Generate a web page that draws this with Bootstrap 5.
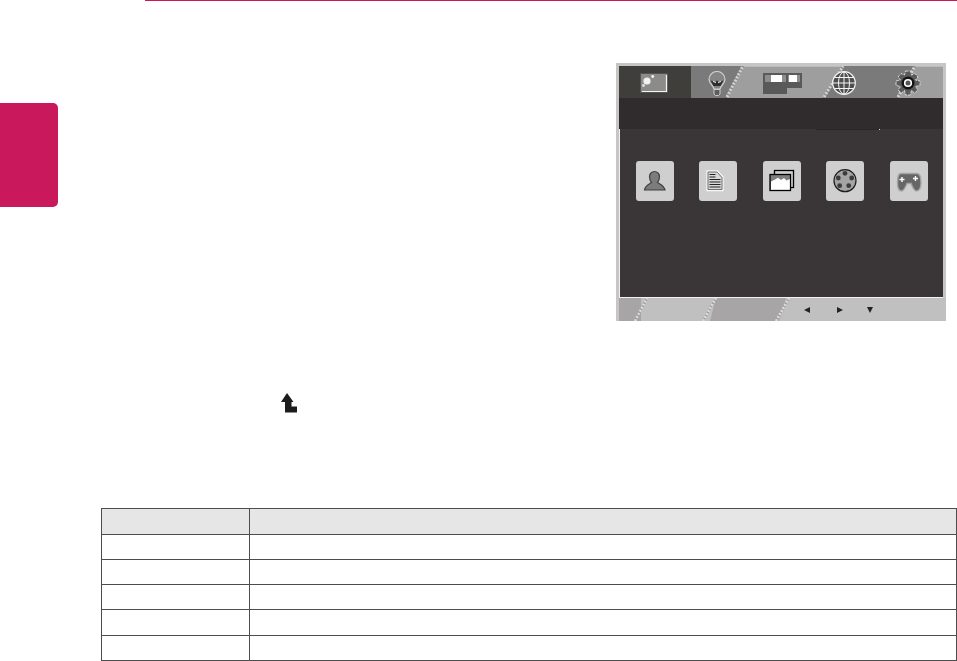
<!DOCTYPE html>
<html lang="en">
<head>
    <meta charset="UTF-8">
    <title>Picture menu</title>
    <link href="https://cdn.jsdelivr.net/npm/bootstrap@5.3.2/dist/css/bootstrap.min.css" rel="stylesheet">
    <style>
        body { background: #fff; font-family: "Liberation Sans", Arial, sans-serif; }
        .page-rule { height: 1px; margin-left: 145px; background: #c9185b; }
        .side-tab { width: 58px; height: 104px; margin-top: 102px; background: #c9185b; border-radius: 0 5px 5px 0; }
        .osd-box { width: 330px; height: 258px; margin-top: 62px; margin-right: 11px; padding: 3px 3px 0; background: #c6c6c6; }
        .osd-tabs { position: relative; height: 32px; padding: 2px 0 0 3px; }
        .osd-back { position: absolute; left: 0; top: 0; width: 100%; height: 100%; }
        .osd-cell { position: relative; width: 63.5px; }
        .osd-band { height: 31px; background: #302c2d; }
        .osd-body { position: relative; height: 169px; padding: 32px 0 0 3px; background: #3a3637; border-left: 1px solid #f2f2f2; border-bottom: 1px solid #f2f2f2; }
        .osd-notch { position: absolute; left: 196px; top: 0; width: 64px; height: 1px; background: #2a2627; border-right: 1px solid #ddd; }
        .osd-btn { width: 38px; height: 40px; background: #cfcfcf; border-radius: 3px; }
        .osd-foot { position: relative; height: 23px; margin-right: -3px; }
        .osd-keys { position: relative; height: 100%; padding-left: 185px; }
        .osd-key-a { width: 33px; }
        .osd-key-b { width: 30px; }
        .return-mark { margin: 72px 0 0 281px; height: 20px; }
        .spec-table { --bs-table-border-color: #4d4d4d; width: 856px; margin: 95px 0 0 101px; table-layout: fixed; }
        .spec-table th, .spec-table td { padding: 0; height: 25px; }
        .spec-table thead th { --bs-table-bg: #e6e6e6; height: 26px; }
        .spec-table .row-tall td { height: 26px; }
        .spec-table .col-key { width: 148px; }
    </style>
</head>
<body>
<div class="page-rule"></div>

<div class="d-flex justify-content-between align-items-start">
    <div class="side-tab"></div>

    <div class="osd-box">
        <div class="osd-tabs d-flex align-items-center">
            <svg class="osd-back" viewBox="0 0 324 32" preserveAspectRatio="none">
                <rect width="324" height="32" fill="#9e9e9e"/>
                <rect width="324" height="1" fill="#bcbcbc"/>
                <polygon points="72,0 124,0 108,32 72,32" fill="#7a7a7a"/>
                <polygon points="224,0 296,0 280,32 204,32" fill="#7a7a7a"/>
                <rect x="0" width="72" height="32" fill="#3f3e3b"/>
                <g fill="none" stroke-width="3">
                    <path d="M108 31L124 0M205 31L224 0M279 31L296 0" stroke="#8c8c8c"/>
                    <path d="M108 31L124 0M205 31L224 0M279 31L296 0" stroke="#d2d2d2" stroke-dasharray="2 1.5"/>
                </g>
            </svg>
            <div class="osd-cell d-flex justify-content-center">
                <svg width="28" height="20" viewBox="0 0 28 20">
                    <rect x="0.5" y="0.5" width="27" height="19" fill="#8b8b89" stroke="#55534f"/>
                    <path d="M2 18.500H26.500V2" fill="none" stroke="#f4f4f4" stroke-width="1.200"/>
                    <circle cx="7" cy="8" r="3.600" fill="#f2f2f2"/>
                    <circle cx="12.700" cy="3.500" r="1.400" fill="#f2f2f2"/>
                    <circle cx="3.500" cy="12.500" r="1.400" fill="#e0e0e0"/>
                </svg>
            </div>
            <div class="osd-cell d-flex justify-content-center">
                <svg width="18" height="25" viewBox="0 0 18 25">
                    <path d="M6 18C5 14 1 12.500 1 8.500A8 8 0 0 1 17 8.500C17 12.500 13 14 12 18Z" fill="#858585" stroke="#cfcfcf" stroke-width="1.200"/>
                    <path d="M2.500 9.500L7 11L9 9.500L11 11L15.500 9.500L12.500 15H5.500Z" fill="#2e2e2e"/>
                    <path d="M5 10.500L8 11.500M13 10.500L10 11.500" stroke="#eee"/>
                    <path d="M6 18.500H12V23L10.500 24.500H7.500L6 23Z" fill="#5c5c5c" stroke="#ccc"/>
                </svg>
            </div>
            <div class="osd-cell d-flex justify-content-center">
                <svg width="42" height="21" viewBox="-3 0 42 21">
                    <path d="M0 0H39V15H24V21H0Z" fill="#59595a"/>
                    <rect x="2" y="2" width="21" height="7" fill="#8d8d8d"/>
                    <rect x="8" y="2" width="11" height="7" fill="#fff"/>
                    <rect x="25" y="2" width="12" height="7" fill="#8d8d8d"/>
                    <rect x="26" y="2" width="8" height="7" fill="#fff"/>
                </svg>
            </div>
            <div class="osd-cell d-flex justify-content-center">
                <svg width="24" height="24" viewBox="0 0 24 24">
                    <circle cx="12" cy="12" r="11.300" fill="#4e4e4e" stroke="#f4f4f4" stroke-width="1.200"/>
                    <g fill="none" stroke="#f4f4f4">
                        <ellipse cx="12" cy="12" rx="5.500" ry="11"/>
                        <path d="M12 1V23M1 12H23M2.500 6.500H21.500M2.500 17.500H21.500"/>
                    </g>
                </svg>
            </div>
            <div class="osd-cell d-flex justify-content-center">
                <svg width="26" height="26" viewBox="0 0 26 26">
                    <path d="M10.500 1H15.500L16.500 5L20 3.500L23 7L20.500 10L25 11V15.500L20.500 16.500L23 20L19.500 23L16.500 20.500L15.500 25H10.500L9.500 20.500L6.500 23L3 20L5.500 16.500L1 15.500V11L5.500 10L3 7L6 3.500L9.500 5Z" fill="#5b5b5b" stroke="#d8d8d8" stroke-dasharray="3 1"/>
                    <circle cx="13" cy="13" r="6.500" fill="#141414"/>
                    <circle cx="13" cy="13" r="3.300" fill="#555" stroke="#fff" stroke-width="1.600"/>
                </svg>
            </div>
        </div>

        <div class="osd-band"></div>

        <div class="osd-body d-flex align-items-start">
            <div class="osd-notch"></div>
            <div class="osd-cell d-flex justify-content-center">
                <div class="osd-btn">
                    <svg width="38" height="40" viewBox="0 0 38 40">
                        <path d="M8.500 29C9 24.500 13 23 15.500 21.500C14.200 20 13.500 18.500 13.500 15.500A5 5 0 0 1 23.500 15.500C23.500 18.500 22.800 20 21.500 21.500C24 23 28 24.500 29 29Z" fill="#7c7c7c" stroke="#404040" stroke-width="1.200"/>
                    </svg>
                </div>
            </div>
            <div class="osd-cell d-flex justify-content-center">
                <div class="osd-btn">
                    <svg width="38" height="40" viewBox="0 0 38 40">
                        <path d="M8 10H18.500L24 16V29.500H8Z" fill="#d8d8d8" stroke="#f6f6f6" stroke-width="1.400"/>
                        <path d="M9 11H18L23 16.500V28.500H9Z" fill="none" stroke="#555" stroke-width="0.800"/>
                        <path d="M10.500 13.500H16.500M10.500 16H16.500M10.500 18.500H21.500M10.500 21H21.500M10.500 23.500H21.500M10.500 26H21.500" stroke="#222" stroke-width="1.200"/>
                    </svg>
                </div>
            </div>
            <div class="osd-cell d-flex justify-content-center">
                <div class="osd-btn">
                    <svg width="38" height="40" viewBox="0 0 38 40">
                        <rect x="11.500" y="9.500" width="19" height="17" fill="#cfcfcf" stroke="#000" stroke-width="1.300"/>
                        <rect x="7" y="13.500" width="20.500" height="16" fill="#7d7d7d" stroke="#000" stroke-width="1.300"/>
                        <path d="M8 28.800V20.500L12 18.500L15 16.800L18 19L21 17L23.500 19.500L26.800 18V28.800Z" fill="#fff"/>
                    </svg>
                </div>
            </div>
            <div class="osd-cell d-flex justify-content-center">
                <div class="osd-btn">
                    <svg width="38" height="40" viewBox="0 0 38 40">
                        <circle cx="19" cy="19.700" r="11" fill="#a4a4a4" stroke="#1c1c1c" stroke-width="1.200"/>
                        <g fill="#3c3c3c">
                            <circle cx="19" cy="12.300" r="2.400"/>
                            <circle cx="12.300" cy="17" r="2.400"/>
                            <circle cx="25.700" cy="17" r="2.400"/>
                            <circle cx="13.700" cy="24.700" r="2.400"/>
                            <circle cx="22.700" cy="24.700" r="2.400"/>
                        </g>
                    </svg>
                </div>
            </div>
            <div class="osd-cell d-flex justify-content-center">
                <div class="osd-btn">
                    <svg width="38" height="40" viewBox="0 0 38 40">
                        <path d="M11 12.500H27C30 12.500 31 17 31 22C31 27 29 30 26.500 30C24 30 22.500 26 21 22.500H17C15.500 26 14 30 11.500 30C9 30 7.500 27 7.500 22C7.500 17 8 12.500 11 12.500Z" fill="#666" stroke="#a4a4a4" stroke-width="1.400"/>
                        <path d="M9.500 18.500H14.500M12 16V21M23 17.500H28M25.500 15V20" stroke="#fff" stroke-width="1.400"/>
                    </svg>
                </div>
            </div>
        </div>

        <div class="osd-foot">
            <svg class="osd-back" viewBox="0 0 327 23" preserveAspectRatio="none">
                <rect width="327" height="23" fill="#c0c0c0"/>
                <rect width="22" height="23" fill="#a7a5a5"/>
                <polygon points="91,23 97,0 167,0 160,23" fill="#a7a5a5"/>
                <g fill="none" stroke-width="2.500">
                    <path d="M16 23L28 0M84 23L97 0M157 23L170 0" stroke="#a0a0a0"/>
                    <path d="M16 23L28 0M84 23L97 0M157 23L170 0" stroke="#dcdcdc" stroke-dasharray="2 1.500"/>
                </g>
            </svg>
            <div class="osd-keys d-flex align-items-center">
                <div class="osd-key-a d-flex">
                    <svg width="6" height="6" viewBox="0 0 6 6"><path d="M0 3L6 0V6Z" fill="#222"/></svg>
                </div>
                <div class="osd-key-b d-flex">
                    <svg width="6" height="6" viewBox="0 0 6 6"><path d="M6 3L0 0V6Z" fill="#222"/></svg>
                </div>
                <div class="d-flex">
                    <svg width="6" height="6" viewBox="0 0 6 6"><path d="M3 6L0 0H6Z" fill="#222"/></svg>
                </div>
            </div>
        </div>
    </div>
</div>

<div class="return-mark">
    <svg class="d-block" width="16" height="20" viewBox="0 0 16 20">
        <path d="M6 0L12.500 9H10.500V13.500H16V19.500H4V9H0Z" fill="#1c1c1c"/>
    </svg>
</div>

<table class="table table-bordered mb-0 spec-table">
    <thead>
        <tr><th class="col-key"></th><th></th></tr>
    </thead>
    <tbody>
        <tr><td></td><td></td></tr>
        <tr><td></td><td></td></tr>
        <tr><td></td><td></td></tr>
        <tr class="row-tall"><td></td><td></td></tr>
        <tr><td></td><td></td></tr>
    </tbody>
</table>

<script src="https://cdn.jsdelivr.net/npm/bootstrap@5.3.2/dist/js/bootstrap.bundle.min.js"></script>
</body>
</html>
